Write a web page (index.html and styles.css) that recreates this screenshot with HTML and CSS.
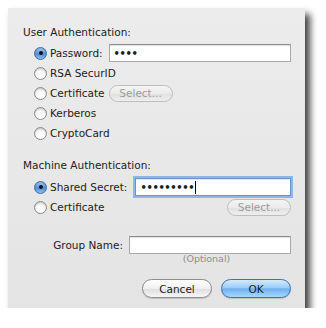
FILE: index.html
```html
<!DOCTYPE html>
<html lang="en">
<head>
    <meta charset="UTF-8">
    <title>Authentication</title>
    <link rel="stylesheet" href="styles.css">
</head>
<body>
    <div class="dialog">
        <!-- User authentication -->
        <div class="heading">User Authentication:</div>
        <div class="options">
            <div class="row">
                <span class="radio checked"></span>
                <span class="label">Password:</span>
                <div class="field pw-field"><span class="dots">••••</span></div>
            </div>
            <div class="row">
                <span class="radio"></span>
                <span class="label">RSA SecurID</span>
            </div>
            <div class="row">
                <span class="radio"></span>
                <span class="label">Certificate</span>
                <span class="button small disabled">Select...</span>
            </div>
            <div class="row">
                <span class="radio"></span>
                <span class="label">Kerberos</span>
            </div>
            <div class="row">
                <span class="radio"></span>
                <span class="label">CryptoCard</span>
            </div>
        </div>

        <!-- Machine authentication -->
        <div class="heading machine">Machine Authentication:</div>
        <div class="options">
            <div class="row">
                <span class="radio checked"></span>
                <span class="label">Shared Secret:</span>
                <div class="field focused secret-field"><span class="dots">•••••••••</span><span class="caret"></span></div>
            </div>
            <div class="row">
                <span class="radio"></span>
                <span class="label">Certificate</span>
                <span class="button small disabled push-right">Select...</span>
            </div>
        </div>

        <div class="group-row">
            <span class="group-label">Group Name:</span>
            <div class="field group-field"></div>
        </div>
        <div class="hint">(Optional)</div>

        <div class="actions">
            <span class="button">Cancel</span>
            <span class="button default">OK</span>
        </div>
    </div>
</body>
</html>
```

FILE: styles.css
```css
body {
    margin: 0;
    background-color: #fff;
    font-family: 'DejaVu Sans', sans-serif;
    font-size: 10.5px;
    color: #1c1c1c;
}
.dialog {
    width: 269px;
    height: 284px;
    margin: 8px 0 0 8px;
    padding: 16px 14px 0 14px;
    background: linear-gradient(#ececec, #e4e4e4);
    box-shadow: 5px 6px 7px rgba(0, 0, 0, 0.75);
    display: flex;
    flex-direction: column;
}
.heading {
    height: 16px;
    line-height: 16px;
    margin-left: 1px;
}
.heading.machine {
    margin-top: 14px;
}
.options {
    margin-top: 3px;
    padding-left: 12px;
    display: flex;
    flex-direction: column;
}
.machine + .options {
    margin-top: 4px;
}
.row {
    height: 20px;
    display: flex;
    align-items: center;
}
.radio {
    width: 11px;
    height: 11px;
    border-radius: 50%;
    border: 1px solid #8a8a8a;
    background: radial-gradient(circle at 50% 70%, #ffffff 30%, #dcdcdc 100%);
    box-shadow: inset 0 1px 1px rgba(0, 0, 0, 0.15);
    margin-right: 3px;
    position: relative;
    flex-shrink: 0;
}
.radio.checked {
    border-color: #3b6aa3;
    background: linear-gradient(#a9cdf2, #4f8fd6 55%, #8cc0f0);
}
.radio.checked::after {
    content: "";
    position: absolute;
    left: 3.5px;
    top: 3.5px;
    width: 4px;
    height: 4px;
    border-radius: 50%;
    background-color: #111;
}
.label {
    white-space: nowrap;
}
.field {
    height: 16px;
    background-color: #fff;
    border: 1px solid #a9a9a9;
    border-top-color: #8a8a8a;
    box-shadow: inset 0 1px 1px rgba(0, 0, 0, 0.12);
    display: flex;
    align-items: center;
    padding-left: 4px;
    box-sizing: content-box;
}
.pw-field {
    margin-left: 6px;
    flex: 1;
}
.secret-field {
    margin-left: 8px;
    flex: 1;
}
.field.focused {
    border-color: #6c93c4;
    box-shadow: 0 0 0 2px #8db8e6, inset 0 1px 1px rgba(0, 0, 0, 0.1);
}
.dots {
    font-size: 10px;
    letter-spacing: -0.4px;
    font-weight: bold;
}
.caret {
    width: 1px;
    height: 13px;
    background-color: #000;
    margin-left: 1px;
}
.button {
    height: 19px;
    border-radius: 10px;
    border: 1px solid #8d8d8d;
    background: linear-gradient(#ffffff, #f0f0f0 50%, #dedede 51%, #f6f6f6);
    box-shadow: 0 1px 1px rgba(0, 0, 0, 0.15);
    display: flex;
    align-items: center;
    justify-content: center;
    box-sizing: border-box;
    width: 70px;
}
.button.small {
    height: 17px;
    width: 64px;
    margin-left: 4px;
}
.button.disabled {
    color: #9c9c9c;
    border-color: #bdbdbd;
    background: linear-gradient(#f4f4f4, #ebebeb 50%, #e0e0e0 51%, #eeeeee);
    box-shadow: none;
}
.button.push-right {
    margin-left: auto;
}
.group-row {
    margin-top: 18px;
    height: 20px;
    display: flex;
    align-items: center;
}
.group-label {
    width: 101px;
    text-align: right;
}
.group-field {
    margin-left: 6px;
    flex: 1;
}
.hint {
    margin-top: -2px;
    margin-left: 100px;
    height: 12px;
    line-height: 12px;
    text-align: center;
    font-size: 9.5px;
    color: #8e8e8e;
}
.actions {
    margin-top: 14px;
    display: flex;
    justify-content: flex-end;
    gap: 9px;
}
.button.default {
    border-color: #3e6fae;
    background: linear-gradient(#d2eafe, #9ccdf8 45%, #6fb0f0 52%, #a7d8fd);
}
```
